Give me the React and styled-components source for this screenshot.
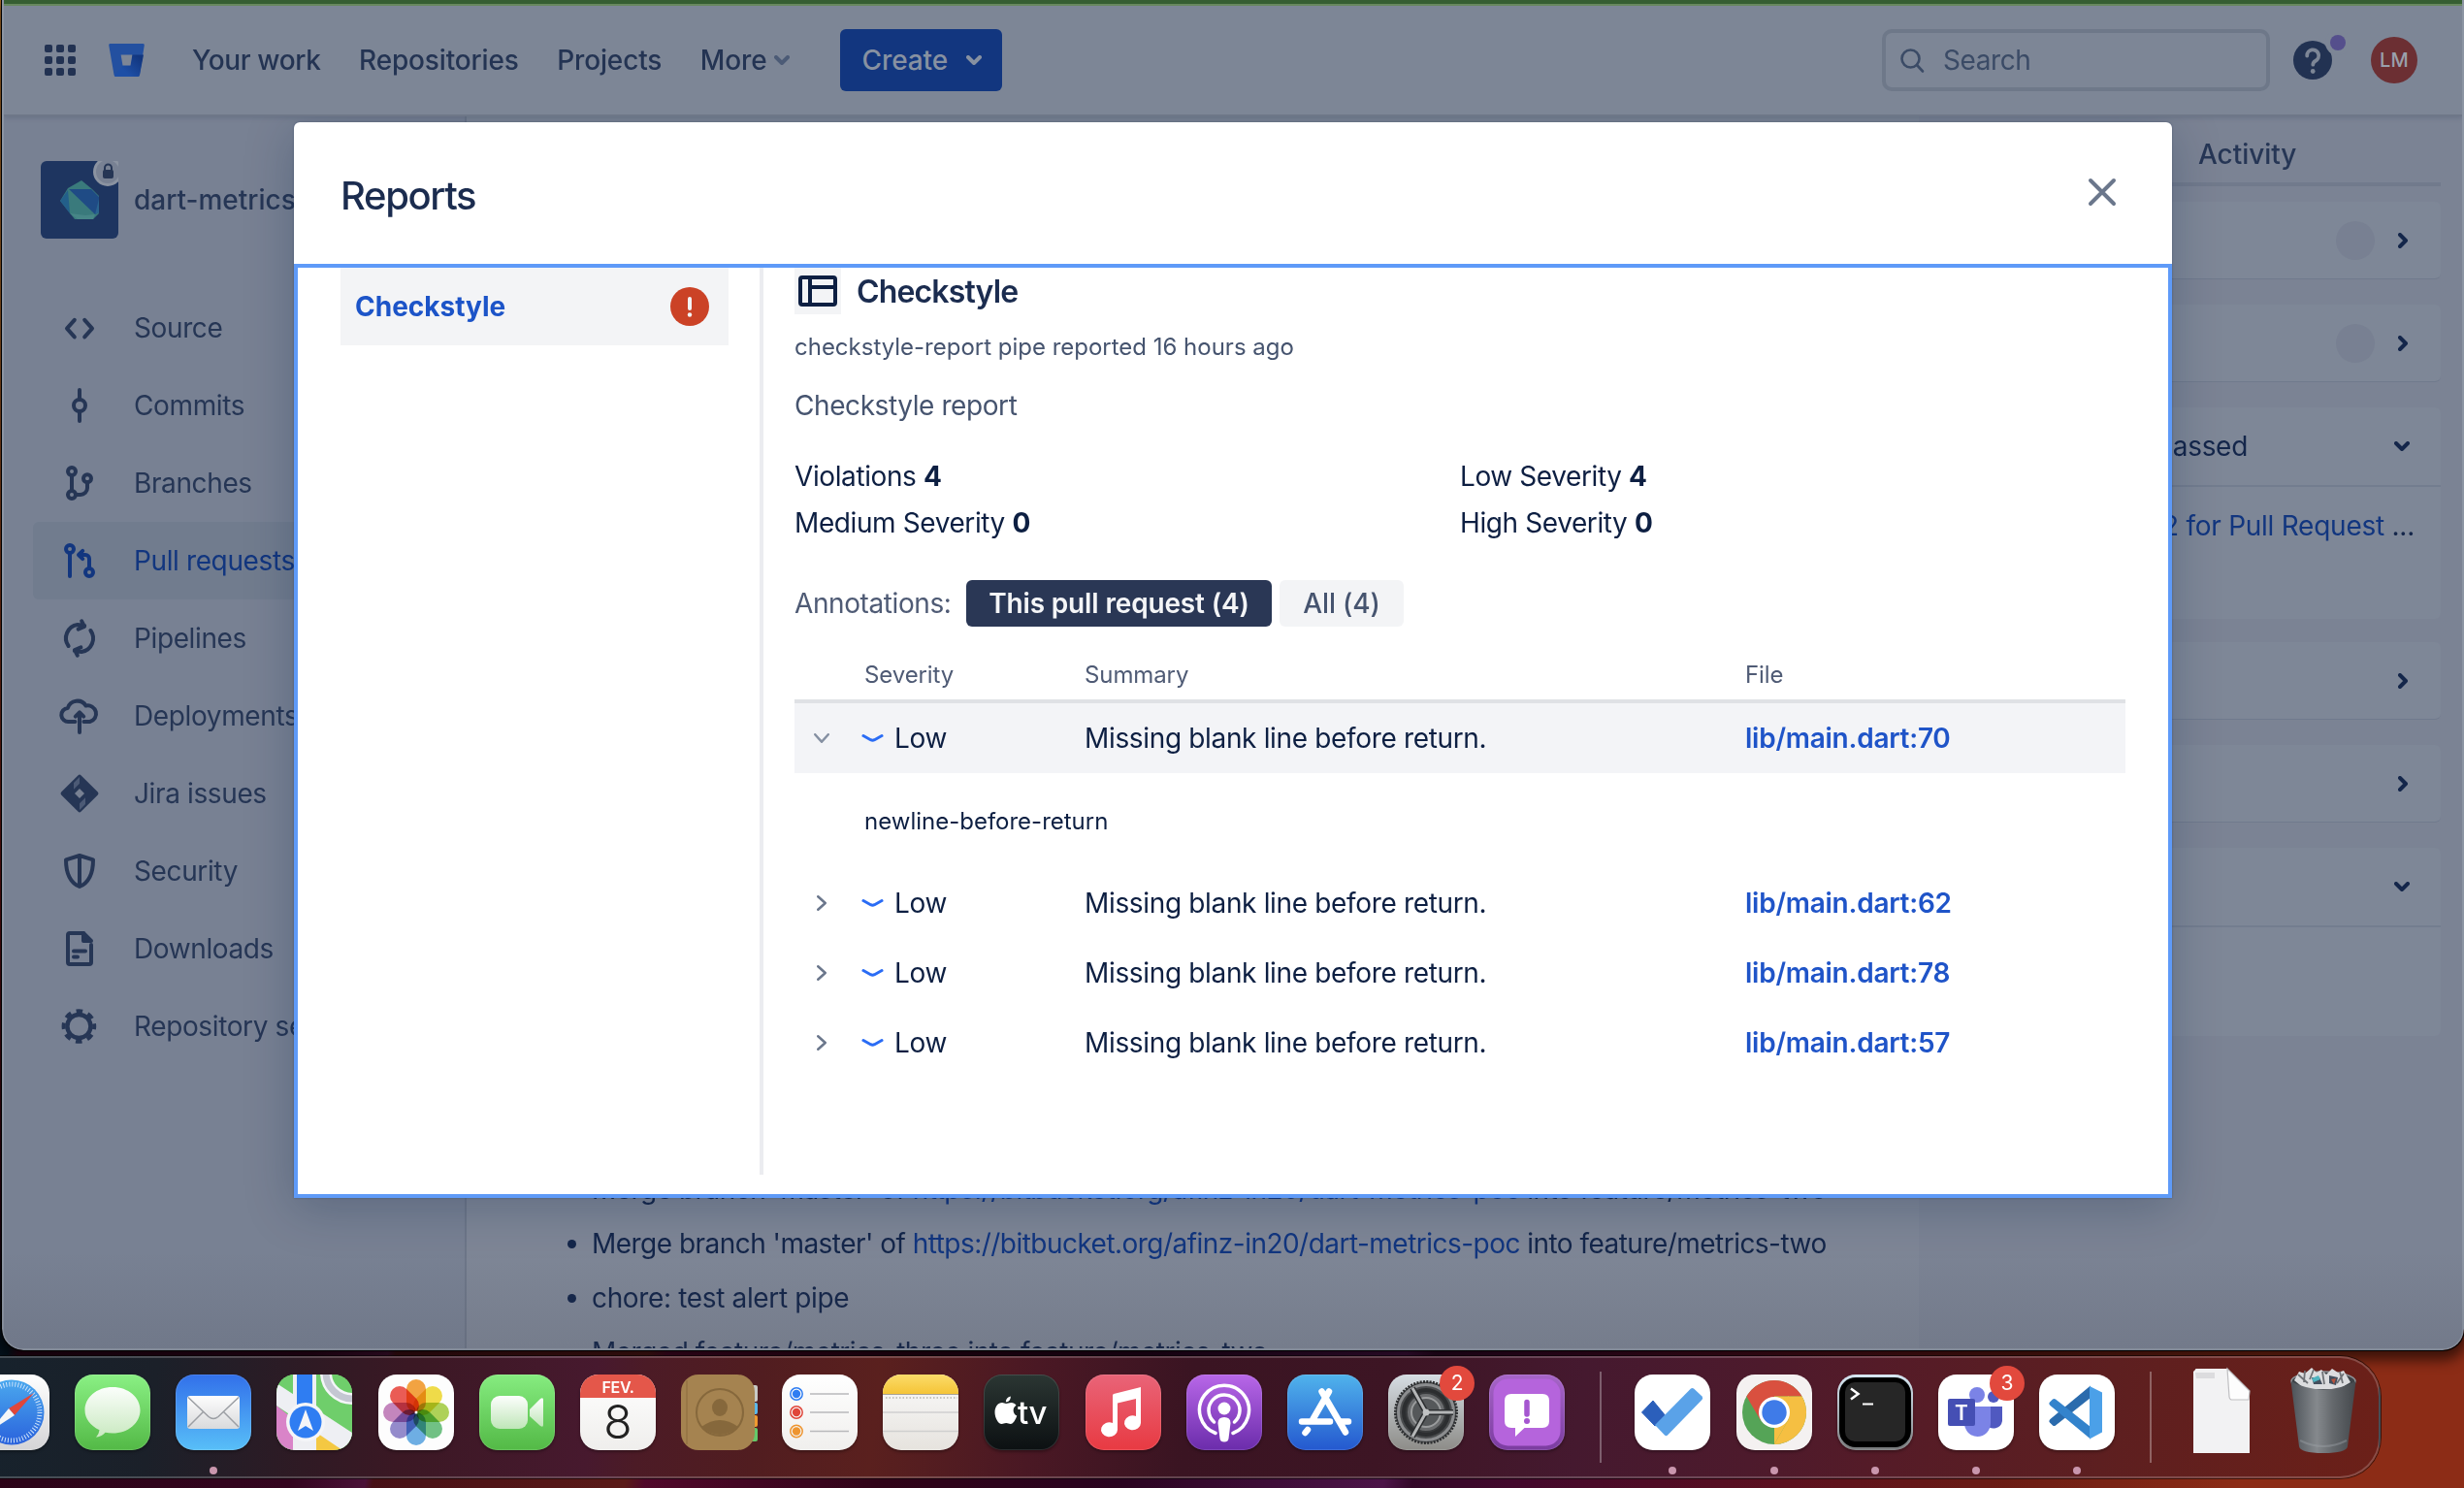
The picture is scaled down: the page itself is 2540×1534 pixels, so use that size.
import React from 'react';
import styled, { createGlobalStyle, css } from 'styled-components';

const GlobalStyle = createGlobalStyle`
  *, *::before, *::after { box-sizing: border-box; }
  body { margin: 0; background: #0b0a12; }
  svg { display: block; flex: none; }
`;

/* ---------- desktop & browser window ---------- */

const Desktop = styled.div`
  position: relative;
  width: 2540px;
  height: 1534px;
  overflow: hidden;
  font-family: Inter, 'Liberation Sans', sans-serif;
  font-size: 28px;
  line-height: 40px;
  letter-spacing: -0.3px;
  color: #14264a;
  white-space: nowrap;
  background:
    linear-gradient(180deg, #c07a2e 0, #b06a28 300px, #8a3a18 600px, #6a1414 900px, #2a0010 1250px, rgba(0, 0, 0, 0) 1380px) 0 0 / 4px 1380px no-repeat,
    linear-gradient(100deg, #03101b 0, #04121d 250px, #2c0418 262px, #34051f 560px, #4a1238 636px, #471016 644px, #5a1a18 900px, #50082a 920px, #300418 1160px, #2a0420 1400px, #4c1448 1670px, #330828 1700px, #42082c 1800px, #5a1020 2060px, #6a1c14 2300px, #8c2c16 2540px);
`;

const BrowserWindow = styled.div`
  position: absolute;
  left: 2px;
  top: 0;
  width: 2538px;
  height: 1392px;
  overflow: hidden;
  display: flex;
  flex-direction: column;
  background: #7e8696;
  border: 2px solid #8c95a3;
  border-top: 0;
  border-radius: 0 0 22px 22px;
`;

const WindowShade = styled.div`
  position: absolute;
  left: 2px;
  top: 0;
  width: 2538px;
  height: 1392px;
  border-radius: 0 0 22px 22px;
  pointer-events: none;
  box-shadow: 0 0 0 1px #000, 0 6px 14px 4px rgba(0, 0, 0, 0.6);
  background: linear-gradient(180deg, rgba(60, 60, 70, 0) 1290px, rgba(60, 60, 70, 0.13) 1392px);
`;

const TabStrip = styled.div`
  flex: none;
  height: 6px;
  background: #365e32;
  border-bottom: 2px solid #68885f;
`;

const TopNav = styled.header`
  flex: none;
  height: 112px;
  padding: 0 46px 0 42px;
  display: flex;
  align-items: center;
  background: #7d8696;
  box-shadow: 0 2px 0 #6e7788, 0 4px 4px rgba(80, 92, 115, 0.35);
  z-index: 1;
  font-weight: 540;
  letter-spacing: -0.1px;
  color: #243453;
`;

const BrandIcon = styled.div`
  margin-left: 34px;
`;

const NavLinks = styled.nav`
  display: flex;
  align-items: center;
  gap: 39.5px;
  margin-left: 49px;
`;

const NavLink = styled.span`
  letter-spacing: ${p => (p.$tight ? '-0.35px' : '-0.15px')};
`;

const MoreLink = styled.span`
  display: flex;
  align-items: center;
  gap: 7px;
`;

const CreateButton = styled.div`
  display: flex;
  align-items: center;
  gap: 19px;
  width: 167px;
  height: 64px;
  margin-left: 52px;
  padding-left: 23px;
  border-radius: 6px;
  background: #12367f;
  color: #8791a1;
`;

const SearchBox = styled.div`
  display: flex;
  align-items: center;
  gap: 18px;
  width: 400px;
  height: 64px;
  margin-left: auto;
  padding-left: 13px;
  border: 4px solid #6e7889;
  border-radius: 10px;
  font-weight: 400;
  letter-spacing: -0.4px;
  color: #3b4b66;
`;

const HelpButton = styled.div`
  width: 54px;
  height: 50px;
  margin: 0 26px 6px 24px;
`;

const UserAvatar = styled.div`
  width: 48px;
  height: 48px;
  border-radius: 50%;
  display: flex;
  align-items: center;
  justify-content: center;
  background: #6c2f33;
  color: #9aa0ac;
  font-size: 20px;
  letter-spacing: 0.2px;
`;

const Body = styled.div`
  flex: 1;
  min-height: 0;
  display: flex;
`;

/* ---------- sidebar ---------- */

const Sidebar = styled.aside`
  flex: none;
  width: 477px;
  padding: 48px 0 0 30px;
  background: #788193;
  border-right: 2px solid #6d7688;
  color: #263655;
`;

const RepoHeader = styled.div`
  display: flex;
  align-items: center;
  gap: 16px;
  margin: 0 0 52px 8px;
  font-weight: 540;
  letter-spacing: 0;
`;

const SideItem = styled.div`
  display: flex;
  align-items: center;
  gap: 32px;
  height: 80px;
  padding-left: 24px;
  border-radius: 6px;
  font-weight: 430;
  letter-spacing: -0.38px;
  color: ${p => (p.$active ? '#12367f' : 'inherit')};
  background: ${p => (p.$active ? '#717c8e' : 'transparent')};
`;

/* ---------- main column ---------- */

const MainColumn = styled.main`
  flex: none;
  width: 1497px;
  padding-top: 1080px;
  overflow: hidden;
  background: #7e8696;
`;

const CommitList = styled.ul`
  margin: 0;
  padding: 0 0 0 104px;
  list-style: none;
`;

const CommitItem = styled.li`
  display: flex;
  align-items: center;
  height: 56px;
  letter-spacing: ${p => p.$tight || '-0.35px'};
  white-space: pre;
  &::before {
    content: '';
    width: 9px;
    height: 9px;
    margin-right: 16px;
    border-radius: 50%;
    background: #14264a;
  }
`;

const MutedLink = styled.span`
  color: #12367f;
`;

/* ---------- right column ---------- */

const SidePanel = styled.aside`
  flex: 1;
  padding: 0 22px 0 200px;
  background: #7b8394;
`;

const PanelTabs = styled.div`
  height: 74px;
  padding: 21px 0 0 88px;
  margin-bottom: 16px;
  border-bottom: 4px solid #717a8c;
  font-weight: 540;
  letter-spacing: -0.05px;
  color: #263655;
`;

const Card = styled.section`
  margin-bottom: ${p => (p.$open ? 24 : 26)}px;
  border-radius: 6px;
  background: #7e8797;
  border-bottom: ${p => (p.$open ? '0' : '1px solid #707a8d')};
`;

const CardHeader = styled.div`
  display: flex;
  align-items: center;
  justify-content: flex-end;
  height: ${p => (p.$open ? 82 : 79)}px;
  padding-right: 28px;
  border-bottom: ${p => (p.$open ? '2px solid #737d8f' : '0')};
`;

const CountBubble = styled.div`
  width: 40px;
  height: 40px;
  margin-right: 16px;
  border-radius: 50%;
  background: #788092;
`;

const StatusText = styled.span`
  margin-right: 147px;
`;

const CardBody = styled.div`
  height: ${p => p.$h}px;
  padding: 20px 27px 0 0;
  text-align: right;
  letter-spacing: -0.25px;
`;

/* ---------- modal ---------- */

const Modal = styled.div`
  position: absolute;
  left: 303px;
  top: 126px;
  width: 1936px;
  height: 1109px;
  display: flex;
  flex-direction: column;
  border-radius: 6px 6px 0 0;
  background: #fff;
  color: #0d1f42;
  box-shadow: 0 0 2px rgba(9, 30, 66, 0.4), 0 10px 50px rgba(9, 30, 66, 0.25);
`;

const ModalHeader = styled.div`
  display: flex;
  align-items: center;
  justify-content: space-between;
  height: 146px;
  padding: 0 48px 2px 48px;
`;

const ModalTitle = styled.h1`
  margin: 7px 0 0;
  font-size: 40px;
  font-weight: 550;
  letter-spacing: -1.35px;
  color: #1b2c4f;
`;

const ModalBody = styled.div`
  flex: 1;
  display: flex;
  padding: 0 44px;
  border: 4px solid #5e9af8;
`;

const ReportTab = styled.div`
  display: flex;
  align-items: center;
  justify-content: space-between;
  width: 400px;
  height: 80px;
  padding: 0 20px 0 15px;
  background: #f3f4f6;
  color: #1c54c8;
  font-weight: 680;
  letter-spacing: 0;
`;

const Divider = styled.div`
  width: 4px;
  height: 935px;
  margin: 0 32px;
  background: #ebecf0;
`;

const Report = styled.section`
  flex: 1;
`;

const ReportTitle = styled.div`
  display: flex;
  align-items: center;
  height: 48px;
  font-size: 32px;
  font-weight: 620;
  letter-spacing: -0.85px;
  color: #1b2c4f;
`;

const TitleText = styled.h2`
  margin: 1px 0 0 16px;
  font: inherit;
`;

const IconTile = styled.div`
  width: 48px;
  height: 48px;
  background: #f3f4f6;
`;

const Meta = styled.p`
  margin: 14px 0 0;
  font-size: ${p => (p.$small ? 24 : 28)}px;
  letter-spacing: ${p => (p.$small ? '-0.01px' : '-0.42px')};
  color: #46546f;
  ${p => !p.$small && css`margin-top: 20px;`}
`;

const Stats = styled.div`
  display: grid;
  grid-template-columns: 1fr 1fr;
  margin-top: 29px;
  line-height: 48px;
  letter-spacing: -0.4px;
  b { font-weight: 700; }
`;

const FilterRow = styled.div`
  display: flex;
  align-items: center;
  gap: 8px;
  margin-top: 35px;
  color: #4f5b75;
`;

const FilterLabel = styled.span`
  width: 169px;
  letter-spacing: -0.4px;
`;

const FilterButton = styled.span`
  width: ${p => p.$w}px;
  height: 48px;
  border-radius: 6px;
  line-height: 48px;
  text-align: center;
  font-weight: ${p => (p.$active ? 600 : 540)};
  letter-spacing: -0.15px;
  background: ${p => (p.$active ? '#2a3755' : '#f3f4f6')};
  color: ${p => (p.$active ? '#f4f5f7' : '#46546f')};
`;

const columns = css`
  display: grid;
  grid-template-columns: 72px 227px 681px 1fr;
  align-items: center;
`;

const TableHead = styled.div`
  ${columns}
  height: 79px;
  padding-top: 25px;
  border-bottom: 4px solid #dfe1e5;
  font-size: 24px;
  letter-spacing: -0.1px;
  color: #4f5b75;
`;

const TableRow = styled.div`
  ${columns}
  height: 72px;
  background: ${p => (p.$open ? '#f3f4f7' : 'transparent')};
`;

const Toggle = styled.span`
  display: flex;
  justify-content: center;
  width: 56px;
`;

const Severity = styled.span`
  display: flex;
  align-items: center;
  gap: 11px;
  margin-left: -3px;
`;

const Summary = styled.span`
  letter-spacing: -0.34px;
`;

const FileLink = styled.span`
  color: #1f54c8;
  font-weight: 590;
  letter-spacing: -0.25px;
`;

const Detail = styled.div`
  height: 98px;
  padding-left: 72px;
  line-height: 100px;
  font-size: 24px;
  letter-spacing: 0;
`;

/* ---------- dock ---------- */

const Dock = styled.div`
  position: absolute;
  left: -80px;
  top: 1398px;
  width: 2534px;
  height: 126px;
  display: flex;
  gap: 26.15px;
  padding: 17px 0 0 51px;
  border: 2px solid rgba(255, 255, 255, 0.2);
  border-radius: 42px;
  box-shadow: 0 0 0 1px rgba(0, 0, 0, 0.55);
  background: linear-gradient(97deg, #17222c 80px, #1b2029 240px, #2f1a24 400px, #3b1824 500px, #47192e 690px, #4c1b26 740px, #511d20 860px, #5a201e 980px, #4a1824 1140px, #3a1422 1300px, #3d1524 1500px, #45192f 1700px, #4d1a2c 1880px, #541b28 2000px, #5d1f20 2240px, #6c2018 2534px);
`;

const DockSlot = styled.div`
  position: relative;
  flex: none;
  width: 78px;
  height: 78px;
`;

const Tile = styled.div`
  width: 78px;
  height: 78px;
  overflow: hidden;
  border-radius: 19px;
  background: ${p => p.$bg};
  box-shadow: inset 0 0 0 1px rgba(255, 255, 255, 0.12), 0 2px 3px rgba(0, 0, 0, 0.3);
`;

const RunningDot = styled.i`
  position: absolute;
  left: 35px;
  top: 95px;
  width: 8px;
  height: 8px;
  border-radius: 50%;
  background: #c996ad;
`;

const Badge = styled.b`
  position: absolute;
  right: -11px;
  top: -9px;
  width: 36px;
  height: 36px;
  border-radius: 50%;
  background: #e2493d;
  color: #fff;
  font-size: 21px;
  font-weight: 400;
  line-height: 36px;
  text-align: center;
`;

const DockSeparator = styled.div`
  flex: none;
  width: 2px;
  height: 94px;
  margin: -3px 8px 0 10px;
  background: rgba(255, 255, 255, 0.3);
`;

/* ---------- icons ---------- */

const Chevron = ({ dir = 'down', w = 16, h = 10, sw = 4, color = 'currentColor' }) => {
  const m = sw / 2;
  const d = dir === 'down'
    ? `M${m} ${m}L${w / 2} ${h - m}L${w - m} ${m}`
    : `M${m} ${m}L${w - m} ${h / 2}L${m} ${h - m}`;
  return (
    <svg width={w} height={h} fill="none" stroke={color} strokeWidth={sw} strokeLinecap="round" strokeLinejoin="round">
      <path d={d} />
    </svg>
  );
};

const SideIcon = ({ children }) => (
  <svg width="48" height="48" viewBox="0 0 24 24" fill="none" stroke="currentColor" strokeWidth="2" strokeLinecap="round" strokeLinejoin="round">
    {children}
  </svg>
);

const sideItems = [
  ['Source', <path d="M9.4 7.9 5.5 12.3l3.9 4.4M14.6 7.9l3.9 4.4-3.9 4.4" />],
  ['Commits', <><circle cx="12" cy="12" r="3" /><path d="M12 4v5M12 15v5" /></>],
  ['Branches', <><circle cx="8" cy="6" r="2" /><circle cx="8" cy="18" r="2" /><circle cx="16" cy="9.6" r="2" /><path d="M8 8v8M16 11.600v2.900a3.500 3.500 0 0 1-3.500 3.500H10" /></>],
  ['Pull requests', <><circle cx="7" cy="6" r="2" /><circle cx="17" cy="18" r="2" /><path d="M7 8v12M11.6 9H15a2 2 0 0 1 2 2v5M13.6 6.9 11.5 9l2.1 2.1" /></>],
  ['Pipelines', <><path d="M6.3 16A7 7 0 0 1 11 5l3.6.5M13.1 3.2l1.4 2.8-3.2 1.3" /><path d="M17.7 8A7 7 0 0 1 13 19l-3.6-.5M10.9 20.8 9.5 18l3.2-1.3" /></>],
  ['Deployments', <><path d="M9.7 15H6.4a3.5 3.5 0 0 1-.5-7A5.2 5.2 0 0 1 15.3 6.8 4.2 4.2 0 1 1 17.3 15H14.2" /><path d="M12 20.5V10.5M9.9 12.3 12 10.2l2.1 2.1" /></>],
  ['Jira issues', <><path d="M12 3.3 20.7 12 12 20.7 3.3 12z" fill="currentColor" /><path d="M12 3.5 9 6.5v3.4l3-3z M12 20.5l3-3v-3.4l-3 3z" fill="#5a6780" stroke="none" opacity=".75" /><path d="M12 9.5 14.5 12 12 14.5 9.5 12z" fill="#788193" stroke="none" /></>],
  ['Security', <path d="M12 4 19 6.2c0 6.500-1.600 11.500-7 13.800C6.600 17.700 5 12.700 5 6.200zM12 4v16" />],
  ['Downloads', <><path d="M14 4H7a1 1 0 0 0-1 1v14a1 1 0 0 0 1 1h10a1 1 0 0 0 1-1v-9M9 13.3h6M9 16.3h2" /><path d="M14 4v4h4z" fill="currentColor" /></>],
  ['Repository settings', <><circle cx="11.7" cy="12" r="6" strokeWidth="2.2" /><circle cx="11.7" cy="12" r="7.9" strokeWidth="2" strokeLinecap="butt" strokeDasharray="3.3 2.904" strokeDashoffset="1.65" /></>],
];

const GridIcon = () => (
  <svg width="32" height="32" fill="#223252">
    {[0, 12, 24].map(y => [0, 12, 24].map(x => <rect key={`${x}-${y}`} x={x} y={y} width="8" height="8" rx="2" />))}
  </svg>
);

const BitbucketLogo = () => (
  <svg width="37" height="34" viewBox="0 0 37 34">
    <defs>
      <linearGradient id="bb" x1="1" y1=".3" x2=".4" y2=".8">
        <stop offset="0" stopColor="#12367f" />
        <stop offset="1" stopColor="#1e4fa6" />
      </linearGradient>
    </defs>
    <path d="M1.500 0h34q1.500 0 1.300 1.500L32 32q-.3 2-2 2H7.500q-1.700 0-2-2L.2 1.500Q0 0 1.500 0z" fill="#2350a0" />
    <path d="M36 11.500H24L22.500 22.500H14.500L5.700 33q.8 1 1.800 1H30q1.700 0 2-2z" fill="url(#bb)" />
    <path d="M12.600 11.500h11.800l-1.900 11h-8z" fill="#7d8696" />
  </svg>
);

const RepoAvatar = () => (
  <svg width="80" height="80">
    <rect width="80" height="80" rx="6" fill="#1e3560" />
    <path d="M28 28 42 20 53 29 60 36v18l-6 6H35L20 41z" fill="#3a7a7c" />
    <path d="M29 29h23l8 8v16l-4 2z" fill="#1f4b85" />
    <path d="M56 55l4-2v-14z" fill="#2a6490" />
    <path d="M28 30 20 41l10 13z" fill="#235f8a" />
    <path d="M30 54l8 6h16l2-5-10 1z" fill="#478687" />
    <circle cx="69" cy="11" r="15" fill="#8b93a1" />
    <circle cx="69" cy="11" r="12" fill="#788193" />
    <rect x="64" y="9" width="11" height="9" rx="2" fill="#263655" />
    <path d="M66 10V7a3.500 3.500 0 0 1 7 0v3" fill="none" stroke="#263655" strokeWidth="2" />
  </svg>
);

const SearchIcon = () => (
  <svg width="28" height="28" fill="none" stroke="#3b4b66" strokeWidth="2.600" strokeLinecap="round">
    <circle cx="12.500" cy="12.500" r="9" />
    <path d="M19 19l6 6.500" />
  </svg>
);

const HelpIcon = () => (
  <svg width="56" height="50">
    <circle cx="20" cy="28" r="20" fill="#223252" />
    <circle cx="46" cy="10" r="13" fill="#7d8696" />
    <circle cx="46" cy="10" r="8" fill="#554f8c" />
    <path d="M14.200 23.500a6 6 0 1 1 8.800 5.200q-2.700 1.400-2.700 4" fill="none" stroke="#7d8696" strokeWidth="3.800" strokeLinecap="round" />
    <circle cx="20.200" cy="39.500" r="2.400" fill="#7d8696" />
  </svg>
);

const CloseIcon = () => (
  <svg width="48" height="48" stroke="#6b778c" strokeWidth="4" strokeLinecap="round">
    <path d="M12 12l24 24M36 12 12 36" />
  </svg>
);

const ErrorIcon = () => (
  <svg width="40" height="40">
    <circle cx="20" cy="20" r="20" fill="#cb4226" />
    <path d="M20 12v10" stroke="#f3f4f6" strokeWidth="4" strokeLinecap="round" />
    <circle cx="20" cy="28.500" r="2.200" fill="#f3f4f6" />
  </svg>
);

const ReportIcon = () => (
  <svg width="48" height="48" fill="none" stroke="#0d1f42" strokeWidth="4">
    <rect x="6" y="10" width="36" height="28" rx="2" />
    <path d="M16 10v28M16 20h26" />
  </svg>
);

/* ---------- dock icons (78 x 78) ---------- */

const Art = ({ children }) => <svg width="78" height="78" viewBox="0 0 78 78">{children}</svg>;

const Grad = ({ id, a, b }) => (
  <linearGradient id={id} x1="0" y1="0" x2="0" y2="1">
    <stop offset="0" stopColor={a} />
    <stop offset="1" stopColor={b} />
  </linearGradient>
);

const Safari = () => (
  <Art>
    <defs><Grad id="saf" a="#4aa8ee" b="#2a62dc" /></defs>
    <circle cx="39" cy="39" r="33.500" fill="url(#saf)" />
    <circle cx="39" cy="39" r="29" fill="none" stroke="#cfe4fa" strokeWidth="5" strokeDasharray="1 2.040" />
    <path d="M62 19 42 42 36 35z" fill="#e0463a" />
    <path d="M16 59 36 35 42 42z" fill="#f4f6f8" />
  </Art>
);

const Messages = () => (
  <Art>
    <defs><Grad id="msg" a="#fbfefb" b="#c9e9c0" /></defs>
    <path d="M39 13c16.500 0 28.500 10.700 28.500 23.700S55.500 60.500 39 60.500q-4 0-7.500-.8-3 4-9.500 5 3-3 3.500-7.500C16 52.500 10.500 45.500 10.500 36.700 10.500 23.700 22.500 13 39 13z" fill="url(#msg)" />
  </Art>
);

const Mail = () => (
  <Art>
    <defs><Grad id="mail" a="#fdfdfd" b="#d9dadc" /></defs>
    <rect x="12" y="22" width="54" height="34" rx="3" fill="url(#mail)" />
    <path d="M13 54 29 38M65 54 49 38M13 23.500 34 43.500q5 4 10 0L65 23.500" fill="none" stroke="#9b9ea3" strokeWidth="1.500" />
  </Art>
);

const Maps = () => (
  <Art>
    <rect width="78" height="78" fill="#6fce6b" />
    <path d="M0 32 20 48v30H0z" fill="#d984c8" />
    <path d="M40 56 68 78H40z" fill="#f4c842" />
    <path d="M0 9 78 60v18H68L0 32z" fill="#eeeff3" />
    <rect x="17" width="24" height="78" fill="#eeeff3" />
    <rect x="21" width="16" height="44" fill="#2f7df2" />
    <circle cx="78" cy="-2" r="27" fill="none" stroke="#f4f5f8" strokeWidth="12" />
    <circle cx="78" cy="-2" r="27" fill="none" stroke="#c4c7d2" strokeWidth="7" />
    <circle cx="30" cy="49" r="20" fill="#f4f5f8" />
    <circle cx="30" cy="49" r="16.500" fill="#2f7df2" />
    <path d="M30 36 38 58l-8-5-8 5z" fill="#f4f5f8" />
  </Art>
);

const petals = ['#f39a2d', '#f0da35', '#a8cf47', '#62bd78', '#5fa8e2', '#8a80c8', '#c07ab8', '#ea4b42'];
const Photos = () => (
  <Art>
    {petals.map((c, i) => (
      <rect key={c} x="29" y="5" width="20" height="34" rx="10" fill={c} opacity=".9" transform={`rotate(${i * 45} 39 39)`} style={{ mixBlendMode: 'multiply' }} />
    ))}
    <circle cx="39" cy="39" r="1.500" fill="#fff" />
  </Art>
);

const FaceTime = () => (
  <Art>
    <defs><Grad id="ft" a="#fdfefd" b="#bfe6b8" /></defs>
    <rect x="12" y="22" width="38" height="34" rx="9" fill="url(#ft)" />
    <path d="M52 36 63 25q3-2 3 1v26q0 3-3 1L52 43z" fill="url(#ft)" />
  </Art>
);

const Calendar = () => (
  <Art>
    <rect width="78" height="24" fill="#e4574a" />
    <text x="39" y="18.500" textAnchor="middle" fontSize="16" fontWeight="600" fill="#fff" letterSpacing="-0.3">FEV.</text>
    <text x="39" y="65.500" textAnchor="middle" fontSize="48" fontWeight="300" fill="#222" letterSpacing="0">8</text>
  </Art>
);

const Contacts = () => (
  <svg width="80" height="78" viewBox="0 0 80 78">
    <rect x="60" y="11" width="19" height="17" rx="2" fill="#c9cac6" />
    <rect x="60" y="29" width="19" height="12" rx="2" fill="#5bb8ea" />
    <rect x="60" y="42" width="19" height="12" rx="2" fill="#f09a30" />
    <rect x="60" y="55" width="19" height="14" rx="2" fill="#64c96a" />
    <rect width="76" height="78" rx="18" fill="#a58350" />
    <path d="M6 6v66" stroke="#8b6b3c" strokeWidth="1" />
    <circle cx="40" cy="39" r="24" fill="none" stroke="#86683c" strokeWidth="2" />
    <ellipse cx="40" cy="34" rx="8" ry="9" fill="#86683c" />
    <path d="M21 54q19-14 38 0-19 16-38 0z" fill="#86683c" />
  </svg>
);

const Reminders = () => (
  <Art>
    {[['#2f7df2', 20], ['#e0463a', 39], ['#ee9530', 58.5]].map(([c, y]) => (
      <g key={c}>
        <circle cx="15" cy={y} r="6.200" fill="none" stroke={c} strokeWidth="1.500" />
        <circle cx="15" cy={y} r="4.200" fill={c} />
        <path d={`M29 ${y}h40`} stroke="#b9b9bb" strokeWidth="1.500" />
      </g>
    ))}
  </Art>
);

const Notes = () => (
  <Art>
    <defs><Grad id="nt" a="#fbdc6a" b="#f5c437" /></defs>
    <rect width="78" height="20" fill="url(#nt)" />
    <path d="M0 20.500h78" stroke="#a8a294" />
    <path d="M3 24h74" stroke="#b8b6ae" strokeWidth="1.500" strokeDasharray="1.500 2" />
    <path d="M0 39h78M0 58.500h78" stroke="#cfcfcf" strokeWidth="1.500" />
  </Art>
);

const applePath = 'M23 30c2-.2 3.300-1 5.500-1 2 0 3.800 1 5 2.800-4.200 2.700-3.600 8.900.8 10.800C33 46.500 30.500 51 27.800 51c-1.800 0-2.600-1-4.600-1s-2.900 1-4.600 1C15 51 11.500 44.500 11.500 39c0-6 3.500-10 7.500-10 1.700 0 2.700.8 4 1zM22.800 28.500c0-3 2-5.500 5-6 .3 3-2 6-5 6z';
const AppleTV = () => (
  <Art>
    <path d={applePath} fill="#fff" />
    <text x="35" y="51" fontSize="33" fontWeight="500" fill="#fff" letterSpacing="-0.5">tv</text>
  </Art>
);

const Music = () => (
  <Art>
    <path d="M29 20 57 13v37a8.500 7.500 0 1 1-5-7V25L33 29.500V57a8.500 7.500 0 1 1-5-7V21z" fill="#fff" />
  </Art>
);

const Podcasts = () => (
  <Art>
    <g fill="none" stroke="#fff" strokeWidth="3.500" strokeLinecap="round">
      <path d="M30 60.500a25.500 25.500 0 1 1 18 0" />
      <path d="M28.500 49a16 16 0 1 1 21 0" />
    </g>
    <circle cx="39" cy="35" r="6.500" fill="#fff" />
    <path d="M32.500 50q0-6 6.500-6t6.500 6l-2 16q-.5 3.500-4.500 3.500T34.500 66z" fill="#fff" />
  </Art>
);

const AppStore = () => (
  <Art>
    <g stroke="#fff" strokeWidth="6.500" strokeLinecap="round">
      <path d="M43 17.500 26.500 46M35.500 17.500 60 59.500M15 48.500h29M56 48.500h7M21 57l-2.500 3" />
    </g>
  </Art>
);

const Settings = () => (
  <Art>
    <circle cx="39" cy="39" r="31.500" fill="#4a4c4e" stroke="#2d2f31" strokeWidth="3" strokeDasharray="2 1.300" />
    <circle cx="39" cy="39" r="28.500" fill="none" stroke="#8b8d8f" strokeWidth="3" />
    <circle cx="39" cy="39" r="25" fill="#2c2e30" />
    <circle cx="39" cy="39" r="20" fill="#6a6c6e" stroke="#3a3c3e" strokeWidth="2" />
    <circle cx="39" cy="39" r="15" fill="#55585a" stroke="#9a9c9d" strokeWidth="2" />
    <path d="M39 39 25 14M39 39H67M39 39 25 64" stroke="#2c2e30" strokeWidth="6" />
    <path d="M39 39 25 14M39 39H67M39 39 25 64" stroke="#b4b6b7" strokeWidth="3" />
    <circle cx="39" cy="39" r="3.500" fill="#c0c2c3" />
  </Art>
);

const Feedback = () => (
  <Art>
    <rect x="4.500" y="4.500" width="69" height="69" rx="15" fill="#b564dc" />
    <path d="M23 20h32q7 0 7 7v21q0 7-7 7H36.500L27 64V55h-4q-7 0-7-7V27q0-7 7-7z" fill="#fff" />
    <path d="M39 28.500v12.500" stroke="#a556d0" strokeWidth="5.500" strokeLinecap="round" />
    <circle cx="39" cy="48" r="3" fill="#a556d0" />
  </Art>
);

const Todo = () => (
  <Art>
    <path d="M7.500 39 19 27 33 44 21 53z" fill="#2b5fbb" stroke="#2b5fbb" strokeLinejoin="round" />
    <path d="M58 14.500q1.500-1 3 0l8.500 8q1.500 1.500 0 3.500L34 62.500q-1.500 1.500-3 0L21 52z" fill="#5aa2e8" />
  </Art>
);

const Chrome = () => (
  <Art>
    <circle cx="39" cy="39" r="33" fill="#55a457" />
    <path d="M39 6a33 33 0 0 1 28.600 16.500H39L25 47.500 10.400 22.500A33 33 0 0 1 39 6z" fill="#d9503f" />
    <path d="M67.600 22.500A33 33 0 0 1 39 72L53.300 47 53 22.500z" fill="#f5bf42" />
    <path d="M39 72 53.300 47.200l.7-24.700H39z" fill="#f5bf42" />
    <circle cx="39" cy="39" r="16" fill="#fff" />
    <circle cx="39" cy="39" r="12.700" fill="#3f7be8" />
  </Art>
);

const Terminal = () => (
  <Art>
    <rect x="2" y="3" width="74" height="72" rx="17" fill="#000" />
    <rect x="8" y="8" width="62" height="61" rx="10" fill="#262626" />
    <path d="M14 14.500 21.500 20 14 25.500" fill="none" stroke="#fff" strokeWidth="2.500" />
    <path d="M26 30.500h11" stroke="#fff" strokeWidth="2" />
  </Art>
);

const Teams = () => (
  <Art>
    <circle cx="57" cy="23" r="6" fill="#5059c0" />
    <path d="M50 33h16v15a9 9 0 0 1-16 4z" fill="#5059c0" />
    <circle cx="40" cy="21" r="8" fill="#7b83e6" />
    <path d="M27 33h27v17a13.500 14 0 0 1-27 0z" fill="#7b83e6" />
    <rect x="10" y="25" width="28" height="28" rx="2" fill="#454fb4" />
    <text x="24" y="47" textAnchor="middle" fontSize="21" fontWeight="600" fill="#fff" letterSpacing="0">T</text>
  </Art>
);

const VSCode = () => (
  <Art>
    <path d="M53 11.500 11.500 46q-2 2-.5 3.500l3 3q1.500 1 3 0L53 24z" fill="#2a6bad" />
    <path d="M53 66.500 11.500 32q-2-2-.5-3.500l3-3q1.500-1 3 0L53 54z" fill="#3383cc" />
    <path d="M52 12 65 18.500V59.500L52 66.500z" fill="#4ba0e8" />
  </Art>
);

const FileArt = styled.div`
  margin-top: -8px;
`;

const BlankDocument = () => (
  <svg width="78" height="92" viewBox="0 -2 78 92">
    <path d="M11 1q0-1 1-1H44L67 23V87H9V3z" fill="#f2f2f3" />
    <path d="M11 4h20v6H12z" fill="#dcdcde" />
    <path d="M44 0 67 23l-1 9H48q-2-1-2-3z" fill="#fdfdfd" stroke="#bfbfc2" strokeWidth="1.200" />
  </svg>
);

const Trash = () => (
  <svg width="78" height="92" viewBox="0 0 78 92">
    <defs>
      <linearGradient id="bin" x1="0" x2="1" y1="0" y2="0">
        <stop offset="0" stopColor="#4c5258" />
        <stop offset=".4" stopColor="#85898d" />
        <stop offset=".65" stopColor="#64686c" />
        <stop offset="1" stopColor="#44484c" />
      </linearGradient>
    </defs>
    <ellipse cx="39" cy="15" rx="33" ry="10" fill="#3d4246" stroke="#8e9398" strokeWidth="1.500" />
    <path d="M9 14 14 5l6 2 7-6 5 5 5-3 5 5 6-6 6 4 6-2 7 12-12 7H20z" fill="#dcdddf" />
    <path d="M27 11h8l3 7h-9zM45 9l9 2-2 8-7-2z" fill="#44505e" />
    <path d="M27 12l7-3 2 4-7 3z" fill="#4fb3c0" />
    <path d="M47 13l5-1-2 6z" fill="#b7543e" />
    <path d="M13 8l10 9M20 4l-1 12M60 7l-7 10M38 5l2 13M56 5l3 12M29 3l-4 10" stroke="#6f7276" strokeWidth="1.800" />
    <path d="M5.500 15Q39 32 72.500 15L64 82q-1 7-25 7T14 82z" fill="url(#bin)" />
    <path d="M15 76q24 12 48 0" fill="none" stroke="#a0a5a9" strokeWidth="2" opacity=".4" />
  </svg>
);

const dockApps = [
  { name: 'safari', art: <Safari />, bg: 'linear-gradient(#ffffff, #d4d4d6)' },
  { name: 'messages', art: <Messages />, bg: 'linear-gradient(#8af084, #53b946)' },
  { name: 'mail', art: <Mail />, bg: 'linear-gradient(#3270ea, #58bff8)', running: true },
  { name: 'maps', art: <Maps />, bg: '#6fce6b' },
  { name: 'photos', art: <Photos />, bg: '#fdfdfd' },
  { name: 'facetime', art: <FaceTime />, bg: 'linear-gradient(#86ec80, #53b946)' },
  { name: 'calendar', art: <Calendar />, bg: 'linear-gradient(#ffffff, #efeeec)' },
  { name: 'contacts', art: <Contacts />, untiled: true },
  { name: 'reminders', art: <Reminders />, bg: 'linear-gradient(#ffffff, #f0efed)' },
  { name: 'notes', art: <Notes />, bg: 'linear-gradient(#fafafa, #e6e3de)' },
  { name: 'tv', art: <AppleTV />, bg: 'linear-gradient(#2b3633, #0c1012)' },
  { name: 'music', art: <Music />, bg: 'linear-gradient(#e96478, #e83a42)' },
  { name: 'podcasts', art: <Podcasts />, bg: 'linear-gradient(#b867e8, #6b2cab)' },
  { name: 'appstore', art: <AppStore />, bg: 'linear-gradient(#50b3ec, #2458cf)' },
  { name: 'settings', art: <Settings />, bg: 'linear-gradient(#d6dde3, #8d8c88)', badge: '2' },
  { name: 'feedback', art: <Feedback />, bg: 'linear-gradient(#a765c8, #7b3ca0)' },
  { separator: true, name: 'sep-apps' },
  { name: 'todo', art: <Todo />, bg: '#ffffff', running: true },
  { name: 'chrome', art: <Chrome />, bg: '#f4f1f1', running: true },
  { name: 'terminal', art: <Terminal />, bg: 'linear-gradient(#d5e6f2, #77797b)', running: true },
  { name: 'teams', art: <Teams />, bg: '#ffffff', running: true, badge: '3' },
  { name: 'vscode', art: <VSCode />, bg: '#ffffff', running: true },
  { separator: true, name: 'sep-files' },
];

/* ---------- sections ---------- */

const annotations = [
  { file: 'lib/main.dart:70', detail: 'newline-before-return' },
  { file: 'lib/main.dart:62' },
  { file: 'lib/main.dart:78' },
  { file: 'lib/main.dart:57' },
];

const repoUrl = 'https://bitbucket.org/afinz-in20/dart-metrics-poc';
const MergeCommit = () => (
  <CommitItem $tight="-0.53px">
    Merge branch 'master' of <MutedLink>{repoUrl}</MutedLink> into feature/metrics-two
  </CommitItem>
);

const ChevronCell = styled.span`
  display: flex;
  justify-content: center;
  width: 24px;
  padding-left: ${p => (p.$shift ? 2 : 0)}px;
`;

const PanelChevron = ({ dir }) => (
  <ChevronCell $shift={dir === 'right'}>
    {dir === 'right' ? <Chevron dir="right" w={10} h={16} /> : <Chevron w={16} h={10} />}
  </ChevronCell>
);

const CollapsedCard = ({ bubble }) => (
  <Card>
    <CardHeader>
      {bubble && <CountBubble />}
      <PanelChevron dir="right" />
    </CardHeader>
  </Card>
);

const ReportsModal = () => (
  <Modal>
    <ModalHeader>
      <ModalTitle>Reports</ModalTitle>
      <CloseIcon />
    </ModalHeader>
    <ModalBody>
      <ReportTab>
        Checkstyle
        <ErrorIcon />
      </ReportTab>
      <Divider />
      <Report>
        <ReportTitle>
          <IconTile><ReportIcon /></IconTile>
          <TitleText>Checkstyle</TitleText>
        </ReportTitle>
        <Meta $small>checkstyle-report pipe reported 16 hours ago</Meta>
        <Meta>Checkstyle report</Meta>
        <Stats>
          <span>Violations <b>4</b></span>
          <span>Low Severity <b>4</b></span>
          <span>Medium Severity <b>0</b></span>
          <span>High Severity <b>0</b></span>
        </Stats>
        <FilterRow>
          <FilterLabel>Annotations:</FilterLabel>
          <FilterButton $w={315} $active>This pull request (4)</FilterButton>
          <FilterButton $w={128}>All (4)</FilterButton>
        </FilterRow>
        <TableHead>
          <span />
          <span>Severity</span>
          <span>Summary</span>
          <span>File</span>
        </TableHead>
        {annotations.map(({ file, detail }) => (
          <React.Fragment key={file}>
            <TableRow $open={!!detail}>
              <Toggle>
                {detail
                  ? <Chevron w={16} h={10} sw={2.5} color="#8590a2" />
                  : <Chevron dir="right" w={10} h={16} sw={2.5} color="#6b778c" />}
              </Toggle>
              <Severity>
                <svg width="23" height="10" fill="none" stroke="#2a6cf5" strokeWidth="3" strokeLinecap="round">
                  <path d="M2 2.500 9.500 6.700q2 1 4 0L21 2.500" />
                </svg>
                Low
              </Severity>
              <Summary>Missing blank line before return.</Summary>
              <FileLink>{file}</FileLink>
            </TableRow>
            {detail && <Detail>{detail}</Detail>}
          </React.Fragment>
        ))}
      </Report>
    </ModalBody>
  </Modal>
);

export default function App() {
  return (
    <Desktop>
      <GlobalStyle />
      <BrowserWindow>
        <TabStrip />
        <TopNav>
          <GridIcon />
          <BrandIcon><BitbucketLogo /></BrandIcon>
          <NavLinks>
            <NavLink $tight>Your work</NavLink>
            <NavLink>Repositories</NavLink>
            <NavLink>Projects</NavLink>
            <MoreLink>More<Chevron color="#4c5b76" /></MoreLink>
          </NavLinks>
          <CreateButton>Create<Chevron /></CreateButton>
          <SearchBox><SearchIcon />Search</SearchBox>
          <HelpButton><HelpIcon /></HelpButton>
          <UserAvatar>LM</UserAvatar>
        </TopNav>
        <Body>
          <Sidebar>
            <RepoHeader><RepoAvatar />dart-metrics</RepoHeader>
            {sideItems.map(([label, icon]) => (
              <SideItem key={label} $active={label === 'Pull requests'}>
                <SideIcon>{icon}</SideIcon>
                {label}
              </SideItem>
            ))}
          </Sidebar>
          <MainColumn>
            <CommitList>
              <MergeCommit />
              <MergeCommit />
              <CommitItem>chore: test alert pipe</CommitItem>
              <CommitItem $tight="-0.5px">Merged feature/metrics-three into feature/metrics-two</CommitItem>
            </CommitList>
          </MainColumn>
          <SidePanel>
            <PanelTabs>Activity</PanelTabs>
            <CollapsedCard bubble />
            <CollapsedCard bubble />
            <Card $open>
              <CardHeader $open>
                <StatusText>passed</StatusText>
                <PanelChevron />
              </CardHeader>
              <CardBody $h={136}><MutedLink>2 for Pull Request</MutedLink> ...</CardBody>
            </Card>
            <CollapsedCard />
            <CollapsedCard />
            <Card $open>
              <CardHeader $open><PanelChevron /></CardHeader>
              <CardBody $h={112} />
            </Card>
          </SidePanel>
        </Body>
      </BrowserWindow>
      <WindowShade />
      <ReportsModal />
      <Dock>
        {dockApps.map(({ name, art, bg, running, badge, separator, untiled }) => separator
          ? <DockSeparator key={name} />
          : (
            <DockSlot key={name}>
              {untiled ? art : <Tile $bg={bg}>{art}</Tile>}
              {running && <RunningDot />}
              {badge && <Badge>{badge}</Badge>}
            </DockSlot>
          ))}
        <DockSlot><FileArt><BlankDocument /></FileArt></DockSlot>
        <DockSlot><FileArt><Trash /></FileArt></DockSlot>
      </Dock>
    </Desktop>
  );
}
